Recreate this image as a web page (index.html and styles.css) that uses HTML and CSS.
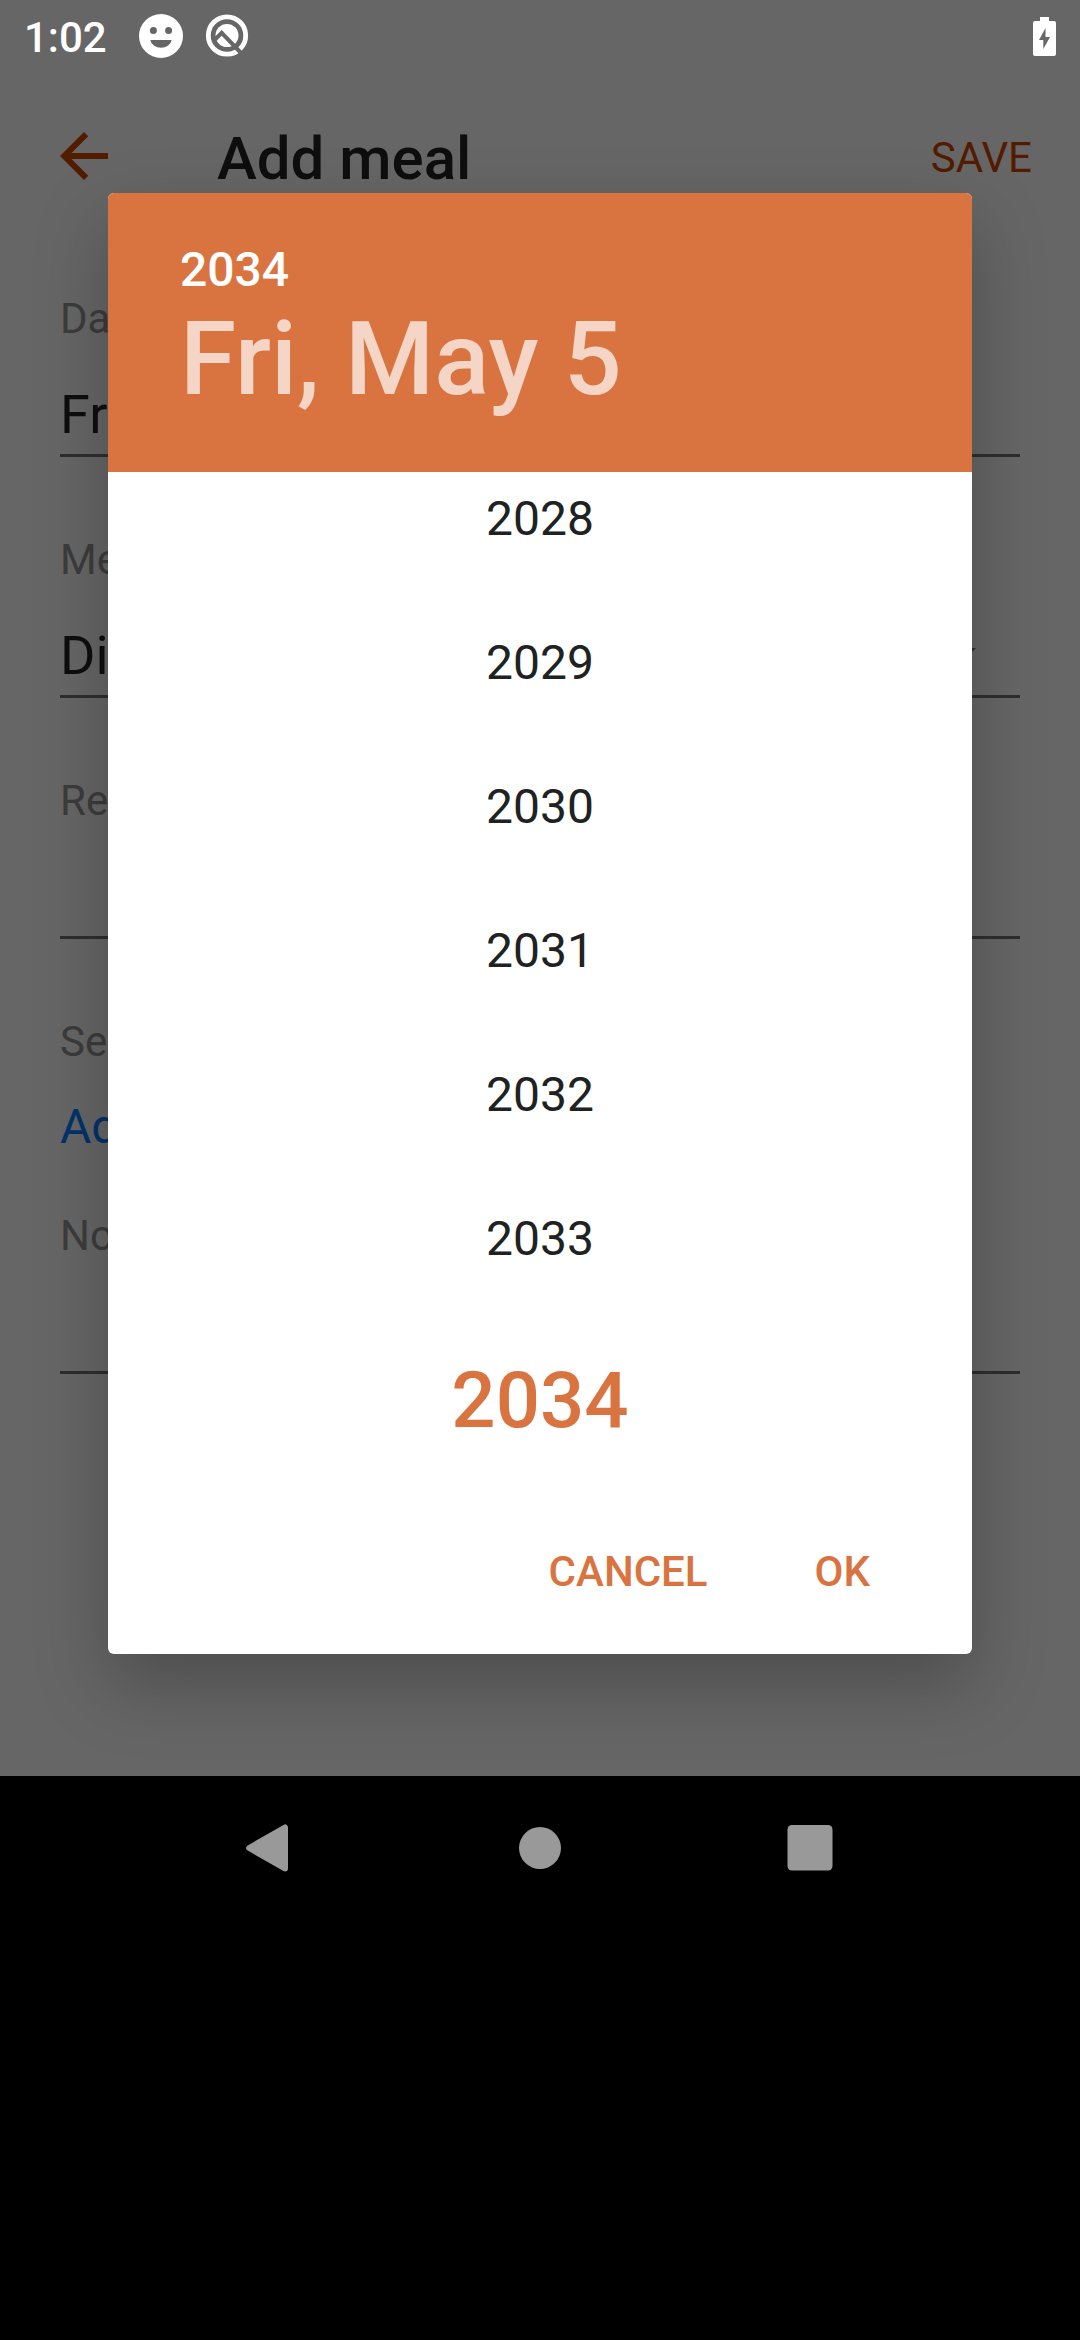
FILE: index.html
```html
<!DOCTYPE html>
<html lang="en">
<head>
<meta charset="utf-8">
<title>Add meal</title>
<link rel="stylesheet" href="styles.css">
</head>
<body>
<div class="phone">
  <main class="app">
    <div class="status-bar">
      <span class="clock">1:02</span>
      <svg class="status-icon" width="44" height="44" viewBox="0 0 44 44">
        <path fill="#fff" fill-rule="evenodd" d="M22 0a22 22 0 1 0 0 44a22 22 0 0 0 0-44zM14.4 13a3.5 3.5 0 1 1 0 7a3.5 3.5 0 0 1 0-7zM29.6 13a3.5 3.5 0 1 1 0 7a3.5 3.5 0 0 1 0-7zM11.3 26h21.4a10.8 9 0 0 1-21.4 0z"/>
      </svg>
      <svg class="status-icon debug" width="44" height="44" viewBox="0 0 44 44">
        <circle cx="22" cy="21.5" r="18.7" fill="none" stroke="#fff" stroke-width="4.8"/>
        <circle cx="22" cy="21.5" r="11.5" fill="#fff"/>
        <path fill="none" stroke="#666" stroke-width="4" d="M9 26.5l7.7-7.7L37 40"/>
      </svg>
      <svg class="battery" width="23" height="39" viewBox="0 0 23 39">
        <path fill="#fff" fill-rule="evenodd" d="M7 0h9v4h5a2 2 0 0 1 2 2v31a2 2 0 0 1-2 2H2a2 2 0 0 1-2-2V6a2 2 0 0 1 2-2h5zM12.5 11L6 23h4.3v9L17 20h-4.5z"/>
      </svg>
    </div>
    <header class="app-bar">
      <svg class="back" width="72" height="72" viewBox="0 0 24 24"><path fill="#521c00" d="M20 11H7.83l5.59-5.59L12 4l-8 8 8 8 1.41-1.41L7.83 13H20v-2z"/></svg>
      <h1 class="title">Add meal</h1>
      <span class="save">SAVE</span>
    </header>
    <form class="form">
      <div class="field"><span class="label">Date</span><span class="value">Fri</span></div>
      <div class="field"><span class="label">Meal</span><span class="value">Dinner<i class="caret"></i></span></div>
      <div class="field"><span class="label">Recipe</span><span class="value"></span></div>
      <div class="servings"><span class="label">Servings</span><a class="link">Add</a></div>
      <div class="field"><span class="label">Notes</span><span class="value"></span></div>
    </form>
  </main>
  <nav class="nav-bar">
    <svg width="48" height="48" viewBox="0 0 48 48"><path fill="#999" stroke="#999" stroke-width="6" stroke-linejoin="round" d="M39 3.5V44.5L3.2 24z"/></svg>
    <svg width="48" height="48" viewBox="0 0 48 48"><circle cx="24" cy="24" r="21" fill="#999"/></svg>
    <svg width="48" height="48" viewBox="0 0 48 48"><rect x="1.5" y="1" width="45" height="45.5" rx="4.5" fill="#999"/></svg>
  </nav>
  <section class="dialog">
    <header class="dialog-header">
      <span class="header-year">2034</span>
      <span class="header-date">Fri, May 5</span>
    </header>
    <div class="years">
      <span class="year">2028</span>
      <span class="year">2029</span>
      <span class="year">2030</span>
      <span class="year">2031</span>
      <span class="year">2032</span>
      <span class="year">2033</span>
      <span class="year selected">2034</span>
    </div>
    <div class="actions"><span class="action">CANCEL</span><span class="action">OK</span></div>
  </section>
</div>
</body>
</html>
```
FILE: styles.css
```css
* { box-sizing: border-box; }
body { margin: 0; background: #000; font-family: Roboto, "Liberation Sans", sans-serif; }
svg { display: block; flex: none; }

.phone { position: relative; width: 1080px; height: 2340px; overflow: hidden; background: #000; }
.app { height: 1776px; background: #666; }

.status-bar { display: flex; align-items: center; height: 72px; padding: 0 24px; color: #fff; }
.clock { width: 115px; font-size: 42px; font-weight: 500; line-height: 76px; padding-top: 3px; }
.debug { margin-left: 22px; }
.battery { margin-left: auto; }

.app-bar { display: flex; align-items: center; height: 168px; padding: 0 48px; }
.title { flex: 1; margin: 6px 0 0 97px; font-size: 60px; font-weight: 500; line-height: 72px; color: #0e0e0e; }
.save { font-size: 42px; line-height: 50px; margin-top: 4px; color: #521c00; }

.form { display: flex; flex-direction: column; padding: 54px 60px 0; color: #0e0e0e; }
.field { display: flex; flex-direction: column; height: 163px; margin-bottom: 78px; border-bottom: 3px solid #2e2e2e; }
.label { font-size: 42px; line-height: 50px; color: #3c3c3c; }
.value { display: flex; justify-content: space-between; height: 68px; margin-top: 37px; font-size: 54px; line-height: 68px; }
.caret { width: 0; height: 0; margin: 26px 44px 0 0; border: 15px solid transparent; border-top-color: #2e2e2e; border-bottom: 0; }
.servings { display: flex; flex-direction: column; height: 140px; margin-bottom: 54px; }
.link { margin-top: 30px; font-size: 48px; line-height: 60px; color: #00336b; }

.nav-bar { display: flex; justify-content: space-between; height: 144px; padding: 0 246px; align-items: center; }

.dialog { position: absolute; left: 108px; top: 193px; width: 864px; height: 1461px; display: flex; flex-direction: column; overflow: hidden; border-radius: 6px; background: #fff; box-shadow: 0 30px 72px rgba(0, 0, 0, .25); }
.dialog-header { flex: none; display: flex; flex-direction: column; height: 279px; padding: 49px 72px; background: #d97441; color: #fff; }
.header-year { font-size: 48px; font-weight: 500; line-height: 56px; }
.header-date { font-size: 102px; font-weight: 500; line-height: 122px; color: rgba(255, 255, 255, .7); }
.years { flex: none; display: flex; flex-direction: column; justify-content: flex-end; height: 1019px; overflow: hidden; text-align: center; }
.year { flex: none; font-size: 48px; line-height: 144px; color: #202222; }
.selected { font-size: 78px; font-weight: 500; line-height: 180px; color: #d97441; }
.actions { display: flex; justify-content: flex-end; gap: 107px; padding: 56px 102px 0 0; }
.action { font-size: 42px; font-weight: 500; line-height: 50px; color: #d97441; }
```
